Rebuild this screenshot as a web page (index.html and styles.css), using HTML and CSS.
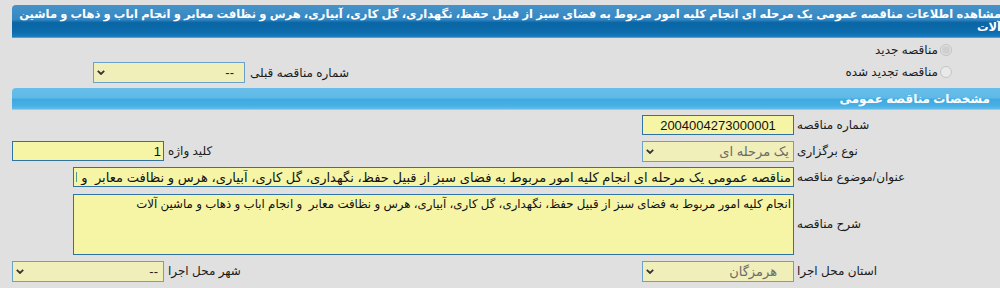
FILE: index.html
```html
<!DOCTYPE html>
<html lang="fa">
<head>
<meta charset="utf-8">
<title>مشاهده اطلاعات مناقصه</title>
<link rel="stylesheet" href="styles.css">
</head>
<body>
<div class="page">
  <div class="titlebar">مشاهده اطلاعات مناقصه عمومی یک مرحله ای انجام کلیه امور مربوط به فضای سبز از قبیل حفظ، نگهداری، گل کاری، آبیاری، هرس و نظافت معابر و انجام اباب و ذهاب و ماشین آلات</div>

  <div class="choices">
    <div class="choice-row">
      <label class="radio-row"><span class="radio radio-on"></span>مناقصه جدید</label>
    </div>
    <div class="choice-row">
      <label class="radio-row"><span class="radio"></span>مناقصه تجدید شده</label>
      <div class="prev">
        <span class="prev-label">شماره مناقصه قبلی</span>
        <span class="selectbox">
          <select class="select pad-prev" disabled><option>--</option></select>
          <svg class="chev" viewBox="0 0 8 5" width="8" height="5"><path d="M0.8 0.8 L4 4 L7.2 0.8" fill="none" stroke="#333" stroke-width="1.8"/></svg>
        </span>
      </div>
    </div>
  </div>

  <div class="panelhead">مشخصات مناقصه عمومی</div>

  <div class="form">
    <label class="lbl">شماره مناقصه</label>
    <div class="cell"><input class="input center" type="text" readonly value="2004004273000001"></div>
    <div class="lbl"></div>
    <div class="cell"></div>

    <label class="lbl">نوع برگزاری</label>
    <div class="cell">
      <span class="selectbox">
        <select class="select muted pad-type" disabled><option>یک مرحله ای</option></select>
        <svg class="chev" viewBox="0 0 8 5" width="8" height="5"><path d="M0.8 0.8 L4 4 L7.2 0.8" fill="none" stroke="#333" stroke-width="1.8"/></svg>
      </span>
    </div>
    <label class="lbl lbl-left">کلید واژه</label>
    <div class="cell"><input class="input" type="text" readonly value="1"></div>

    <label class="lbl">عنوان/موضوع مناقصه</label>
    <div class="cell wide"><input class="input full" type="text" readonly value="مناقصه عمومی یک مرحله ای انجام کلیه امور مربوط به فضای سبز از قبیل حفظ، نگهداری، گل کاری، آبیاری، هرس و نظافت معابر  و انجام اباب و ذهاب و ماشین آلات"></div>

    <label class="lbl">شرح مناقصه</label>
    <div class="cell wide"><textarea class="textarea" readonly>انجام کلیه امور مربوط به فضای سبز از قبیل حفظ، نگهداری، گل کاری، آبیاری، هرس و نظافت معابر  و انجام اباب و ذهاب و ماشین آلات</textarea></div>

    <label class="lbl">استان محل اجرا</label>
    <div class="cell">
      <span class="selectbox">
        <select class="select muted pad-prov" disabled><option>هرمزگان</option></select>
        <svg class="chev" viewBox="0 0 8 5" width="8" height="5"><path d="M0.8 0.8 L4 4 L7.2 0.8" fill="none" stroke="#333" stroke-width="1.8"/></svg>
      </span>
    </div>
    <label class="lbl lbl-left">شهر محل اجرا</label>
    <div class="cell">
      <span class="selectbox">
        <select class="select pad-city" disabled><option>--</option></select>
        <svg class="chev" viewBox="0 0 8 5" width="8" height="5"><path d="M0.8 0.8 L4 4 L7.2 0.8" fill="none" stroke="#333" stroke-width="1.8"/></svg>
      </span>
    </div>
  </div>
</div>
</body>
</html>
```

FILE: styles.css
```css
html {
  overflow: hidden;
}

body {
  margin: 0;
  background: #e0e0e0;
  font-family: Tahoma, "Liberation Sans", "DejaVu Sans", sans-serif;
  font-size: 12px;
  color: #1a1a1a;
}

.page {
  width: 988px;
  padding: 5px 0 0 12px;
}

.titlebar {
  direction: rtl;
  margin-right: -4px;
  padding: 3px 3px 3px 6px;
  line-height: 13px;
  color: #fff;
  font-weight: bold;
  font-size: 11.5px;
  border-top-left-radius: 4px;
  border-bottom: 1px solid #45a4e6;
  background: linear-gradient(#4593c9 0%, #3587c2 45%, #0a66a5 55%, #0d6cac 85%, #1a7dc0 100%);
}

.choices {
  direction: rtl;
  padding-top: 1px;
}

.choice-row {
  display: flex;
  align-items: center;
  justify-content: space-between;
  height: 22px;
}

.radio-row {
  display: flex;
  align-items: center;
  gap: 2px;
  margin-right: 48px;
  font-size: 12px;
}

.radio {
  width: 10px;
  height: 10px;
  border-radius: 50%;
  border: 1px solid #c4c4c4;
  background: #e9e9e9;
  box-sizing: content-box;
}

.radio-on {
  background: #cfcfcf;
  box-shadow: inset 0 0 0 1px #e6e6e6;
}

.prev {
  display: flex;
  align-items: center;
  gap: 5px;
  margin-left: 81px;
  padding-top: 1px;
}

.panelhead {
  direction: rtl;
  margin-top: 5px;
  height: 21px;
  line-height: 22px;
  padding-right: 10px;
  color: #fff;
  font-weight: bold;
  font-size: 12px;
  border-top-left-radius: 4px;
  border-bottom: 1px solid #8fd0f2;
  background: linear-gradient(#68bee9 0%, #5fb9e7 45%, #3ea9e1 55%, #49b0e4 85%, #62bce9 100%);
}

.form {
  direction: rtl;
  display: grid;
  grid-template-columns: 206px 152px 478px 152px;
  grid-template-rows: 26px 26px 26px 68px 26px;
  padding-top: 2px;
}

.lbl {
  display: flex;
  align-items: center;
  justify-content: flex-end;
  padding-left: 3px;
  font-size: 12px;
  white-space: nowrap;
}

.lbl-left {
  padding-left: 4px;
}

.cell {
  display: flex;
  align-items: center;
}

.cell.wide {
  grid-column: 2 / 5;
  margin-left: 61px;
}

.input,
.select,
.textarea {
  box-sizing: border-box;
  margin: 0;
  font-family: Tahoma, "Liberation Sans", "DejaVu Sans", sans-serif;
  direction: rtl;
  outline: none;
  border-radius: 0;
}

.input {
  width: 152px;
  height: 20px;
  padding: 0 2px;
  font-size: 13px;
  background: #f6f5a6;
  border: 1px solid #2f72a6;
  color: #111;
}

.input.center {
  text-align: center;
}

.input.full {
  width: 100%;
  font-size: 13.1px;
}

.selectbox {
  position: relative;
  display: block;
  width: 152px;
  height: 21px;
}

.select {
  appearance: none;
  -webkit-appearance: none;
  display: block;
  width: 152px;
  height: 21px;
  padding: 0 4px 0 16px;
  font-size: 13px;
  line-height: 19px;
  background: #f0eeb9;
  border: 1px solid #6aa0c9;
  color: #222;
  opacity: 1;
}

.select.muted {
  color: #6a6a6a;
}

.pad-prev {
  padding-right: 10px;
}

.pad-type {
  padding-right: 4px;
}

.pad-prov {
  padding-right: 16px;
}

.pad-city {
  padding-right: 5px;
}

.chev {
  position: absolute;
  left: 4px;
  top: 8px;
  pointer-events: none;
}

.textarea {
  display: block;
  width: 100%;
  height: 61px;
  padding: 2px 2px;
  line-height: 14px;
  font-size: 11.8px;
  background: #f6f5a6;
  border: 1px solid #2f72a6;
  color: #111;
  resize: none;
  overflow: hidden;
}
```
